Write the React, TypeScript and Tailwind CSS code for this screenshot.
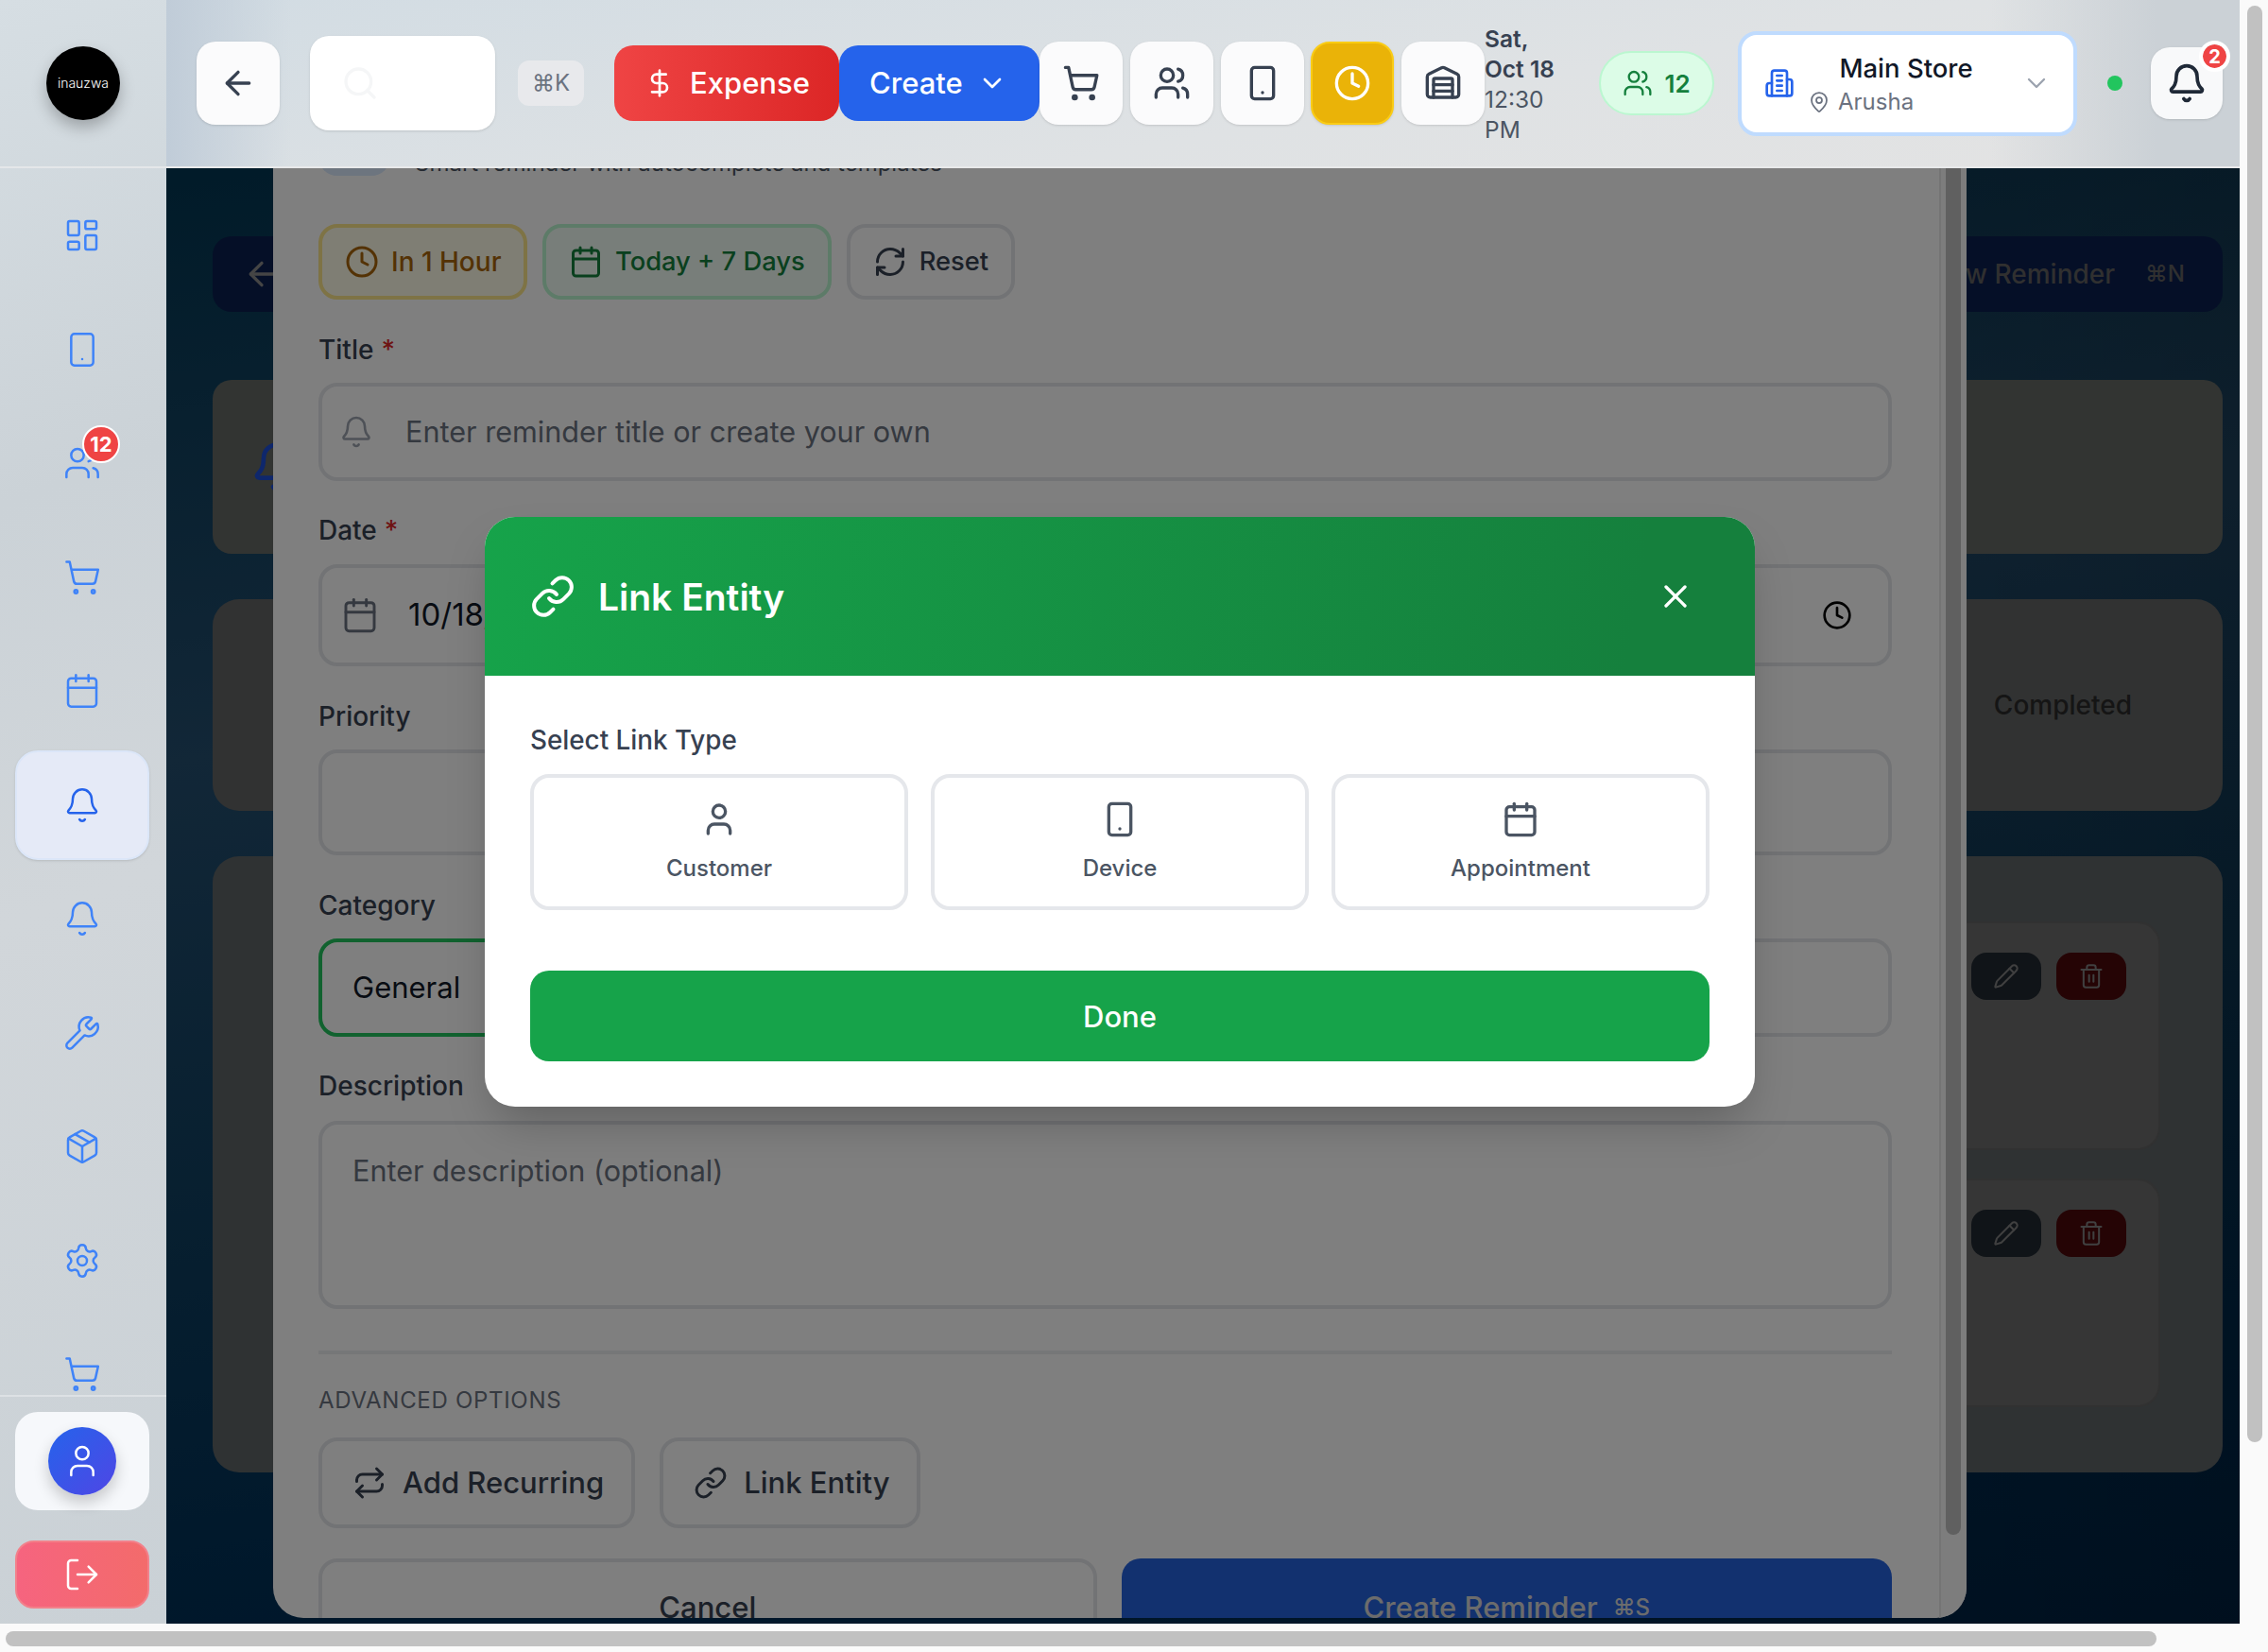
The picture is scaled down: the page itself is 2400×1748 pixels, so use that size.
import React from 'react';
import {
  ArrowLeft, Bell, Calendar, ChevronDown, Clock, DollarSign, LayoutDashboard, Link as LinkIcon,
  LogOut, MapPin, Package, Pencil, RefreshCw, Repeat, Search, Settings, ShoppingCart, Smartphone, Trash2,
  User, Users, Warehouse, Wrench, X,
} from 'lucide-react';

const navItems = [
  { icon: LayoutDashboard },
  { icon: Smartphone },
  { icon: Users, badge: '12' },
  { icon: ShoppingCart },
  { icon: Calendar },
  { icon: Bell, active: true },
  { icon: Bell },
  { icon: Wrench },
  { icon: Package },
  { icon: Settings },
  { icon: ShoppingCart },
];

// lucide's older Building2, the current one has different windows
const StoreIcon = () => (
  <svg viewBox="0 0 24 24" fill="none" stroke="currentColor" strokeWidth={2} strokeLinecap="round" strokeLinejoin="round" className="h-8 w-8 shrink-0 text-[#2563eb]">
    <path d="M6 22V4a2 2 0 0 1 2-2h8a2 2 0 0 1 2 2v18Z" />
    <path d="M6 12H4a2 2 0 0 0-2 2v6a2 2 0 0 0 2 2h2" />
    <path d="M18 9h2a2 2 0 0 1 2 2v9a2 2 0 0 1-2 2h-2" />
    <path d="M10 6h4" />
    <path d="M10 10h4" />
    <path d="M10 14h4" />
    <path d="M10 18h4" />
  </svg>
);

const Sidebar = () => (
  <aside className="relative z-40 flex w-[176px] shrink-0 flex-col bg-[linear-gradient(160deg,#d6dee3_0%,#cbd2d7_30%,#d1d6da_55%,#cad1d6_100%)]">
    <div className="flex h-[178px] shrink-0 items-center justify-center border-b-2 border-[#e4e7e9]">
      <div className="flex h-[78px] w-[78px] items-center justify-center rounded-full bg-black shadow-[0_8px_16px_rgba(0,0,0,0.25)]">
        <span className="text-[14px] font-light leading-none text-white">inauzwa</span>
      </div>
    </div>
    <nav className="flex min-h-0 flex-1 flex-col gap-[4.5px] overflow-hidden pl-4 pr-[18px] pt-[13px]">
      {navItems.map((item, i) => (
        <div
          key={i}
          className={`relative flex h-[116px] shrink-0 items-center justify-center rounded-[24px] ${
            item.active ? 'border-2 border-[#dbe6f8] bg-[#e5eaf7] shadow-sm' : ''
          }`}
        >
          <item.icon className={`h-10 w-10 ${item.active ? 'text-[#2563eb]' : 'text-[#3f83f8]'}`} strokeWidth={1.5} />
          {item.badge && (
            <span className="absolute left-[71px] top-[18px] flex h-10 w-10 items-center justify-center rounded-full border-2 border-white bg-[#ef4444] text-[22px] font-bold text-white">
              {item.badge}
            </span>
          )}
        </div>
      ))}
    </nav>
    <div className="flex shrink-0 flex-col gap-8 border-t-2 border-[#dde1e4] pb-4 pl-4 pr-[18px] pt-4">
      <div className="flex h-[104px] items-center justify-center rounded-[24px] bg-[#f6f8fb]">
        <div className="flex h-[72px] w-[72px] items-center justify-center rounded-full bg-[linear-gradient(135deg,#2563eb,#4f46e5)] shadow-[0_8px_16px_rgba(0,0,0,0.2)]">
          <User className="h-10 w-10 text-white" strokeWidth={1.5} />
        </div>
      </div>
      <div className="flex h-[72px] items-center justify-center rounded-[20px] border-2 border-[#f2808a] bg-[linear-gradient(90deg,#f6647f,#f36b6b)]">
        <LogOut className="h-10 w-10 text-white" strokeWidth={1.5} />
      </div>
    </div>
  </aside>
);

const IconButton = ({ icon: Icon, active }: { icon: React.ElementType; active?: boolean }) => (
  <button
    className={`flex h-[88px] w-[88px] shrink-0 items-center justify-center rounded-[20px] shadow-sm ${
      active ? 'border-2 border-[#facc15] bg-[#eab308] text-white' : 'bg-[#fbfbfc] text-[#374151]'
    }`}
  >
    <Icon className="h-10 w-10" strokeWidth={2} />
  </button>
);

const Header = () => (
  <header className="relative z-40 flex h-[178px] shrink-0 items-center border-b-2 border-[#e8e9ea] bg-[linear-gradient(90deg,#c0ccd8_0%,rgba(192,204,216,0)_6%,rgba(205,211,215,0)_88%,#cbd1d6_96%),linear-gradient(170deg,#d2dce3_0%,#dfe2e4_60%,#e3e3e3_100%)] pl-8">
    <IconButton icon={ArrowLeft} />
    <div className="ml-8 flex h-[100px] w-[196px] shrink-0 items-center rounded-[20px] bg-white pl-[33px] shadow-sm">
      <Search className="h-10 w-10 text-[#f5f6f7]" strokeWidth={2} />
    </div>
    <span className="ml-6 flex h-12 w-[70px] shrink-0 items-center justify-center rounded-xl bg-[#e8e9ec] text-2xl text-[#6b7280]">⌘K</span>
    <button className="ml-8 flex h-20 w-[238px] shrink-0 items-center gap-4 rounded-[20px] bg-[linear-gradient(90deg,#ef4444,#dc2626)] pl-8 text-[31px] font-medium text-white">
      <DollarSign className="h-8 w-8" strokeWidth={2} />
      Expense
    </button>
    <button className="flex h-20 w-[212px] shrink-0 items-center rounded-[20px] bg-[#2563eb] pl-8 text-[31px] font-medium text-white">
      Create
      <ChevronDown className="ml-[15px] h-8 w-8" strokeWidth={2} />
    </button>
    <div className="flex shrink-0 gap-[7.75px]">
      <IconButton icon={ShoppingCart} />
      <IconButton icon={Users} />
      <IconButton icon={Smartphone} />
      <IconButton icon={Clock} active />
      <IconButton icon={Warehouse} />
    </div>
    <div className="mt-[2px] w-[96px] shrink-0 text-[24.5px] leading-8">
      <div className="font-semibold text-[#374151]">Sat,<br />Oct 18</div>
      <div className="text-[#4b5563]">12:30<br />PM</div>
    </div>
    <div className="ml-[25px] flex h-[68px] w-[122px] shrink-0 items-center justify-center gap-3 rounded-full border-2 border-[#bbf7d0] bg-[#dcfce7] text-[26px] font-semibold text-[#15803d]">
      <Users className="h-8 w-8" strokeWidth={1.75} />
      12
    </div>
    <div className="ml-[25px] flex h-[111px] w-[359px] shrink-0 items-center rounded-[20px] border-4 border-[#bfdbfe] bg-white pl-6">
      <StoreIcon />
      <div className="ml-[17px] flex w-[202px] flex-col">
        <span className="text-center text-[27.5px] font-medium leading-10 text-[#111827]">Main Store</span>
        <span className="-ml-[3px] flex items-center gap-2 text-2xl leading-8 text-[#6b7280]">
          <MapPin className="h-6 w-6" strokeWidth={1.75} />
          Arusha
        </span>
      </div>
      <ChevronDown className="ml-[21px] h-8 w-8 text-[#9ca3af]" strokeWidth={1.75} />
    </div>
    <span className="ml-8 h-4 w-4 shrink-0 rounded-full bg-[#22c55e]" />
    <button className="relative ml-[30px] flex h-[76px] w-[76px] shrink-0 items-center justify-center rounded-[20px] bg-[#f8f9fa] text-[#1f2937] shadow-sm">
      <Bell className="h-11 w-11" strokeWidth={2} />
      <span className="absolute -right-1 -top-[3px] flex h-[25px] w-[25px] items-center justify-center rounded-full bg-[#ef4444] text-[20px] font-bold leading-none text-white outline-[4px] outline-white">2</span>
    </button>
  </header>
);

// The page behind the dialogs; colours are picked to come out right under the dim layer
const ReminderRow = () => (
  <div className="flex h-[242px] justify-end rounded-[24px] border-2 border-[#626262] bg-[#6c6c6c] pr-[34px] pt-[31px]">
    <div className="flex h-[50px] gap-4">
      <span className="flex w-[74px] items-center justify-center rounded-2xl bg-[#202830]">
        <Pencil className="h-7 w-7 text-[#808080]" strokeWidth={1.75} />
      </span>
      <span className="flex w-[74px] items-center justify-center rounded-2xl bg-[#4a080b]">
        <Trash2 className="h-7 w-7 text-[#808080]" strokeWidth={1.75} />
      </span>
    </div>
  </div>
);

const RemindersPage = () => (
  <main className="flex min-h-0 flex-1 flex-col gap-[48px] bg-[linear-gradient(90deg,rgba(0,0,0,0)_50%,rgba(0,0,0,0.2)_100%),linear-gradient(172deg,#023652_0%,#244e6f_34%,#0f3f60_60%,#003057_82%,#00274c_100%)] pb-[160px] pl-[49px] pr-[18px] pt-[72px]">
    <div className="flex h-20 shrink-0 items-center justify-between">
      <button className="flex h-20 w-[240px] items-center rounded-[20px] bg-[#0b1f4e] pl-8 text-[#8a8a8a]">
        <ArrowLeft className="h-10 w-10" />
      </button>
      <button className="flex h-20 items-center gap-8 rounded-[20px] bg-[#0b1f4e] pl-10 pr-10 text-[28px] font-medium text-[#606060]">
        New Reminder
        <span className="text-2xl">⌘N</span>
      </button>
    </div>
    <div className="mt-[24px] flex h-[184px] shrink-0 items-center rounded-[20px] bg-[#646864] pl-10">
      <Bell className="h-[56px] w-[56px] text-[#1d4ed8]" strokeWidth={2} />
    </div>
    <div className="flex h-[224px] shrink-0 items-center justify-end rounded-[28px] bg-[#626464] pr-[96px] text-[28px] font-medium text-[#2a2a2a]">
      Completed
    </div>
    <div className="flex h-[652px] shrink-0 flex-col gap-[30px] rounded-[28px] bg-[#5f6466] pl-[68px] pr-[66px] pt-[69px]">
      <ReminderRow />
      <ReminderRow />
    </div>
  </main>
);

const Field = ({ label, required, className, children }: { label: string; required?: boolean; className?: string; children: React.ReactNode }) => (
  <div className={className}>
    <label className="block h-10 text-[28px] font-medium leading-10 text-[#374151]">
      {label}
      {required && <span className="ml-2 text-[#dc2626]">*</span>}
    </label>
    {children}
  </div>
);

const inputBox = 'flex items-center rounded-[20px] border-4 border-[#e5e7eb]';

const ReminderPanel = () => (
  <div className="absolute inset-0 z-10 flex items-center justify-center">
    <div className="flex h-[1706px] w-[1792px] overflow-hidden rounded-[32px] bg-white">
      <div className="min-w-0 flex-1 pl-12 pr-[50px] pt-[94px]">
        <div className="flex h-[86px] items-end gap-[26px]">
          <div className="h-[86px] w-[76px] rounded-[20px] bg-[#dbeafe]" />
          <p className="-mb-[3px] text-2xl leading-8 text-[#4b5563]">Smart reminder with autocomplete and templates</p>
        </div>
        <div className="mt-[51px] flex h-20 gap-4 whitespace-nowrap text-[27.3px] font-medium">
          <button className="flex w-[221px] items-center gap-[13px] rounded-[20px] border-4 border-[#fde68a] bg-[#fefce8] pl-6 text-[28px] text-[#a8650a]">
            <Clock className="h-9 w-9" strokeWidth={2} /> In 1 Hour
          </button>
          <button className="flex items-center gap-[13px] rounded-[20px] border-4 border-[#bbf7d0] bg-[#f0fdf4] px-6 text-[#15803d]">
            <Calendar className="h-9 w-9" strokeWidth={2} /> Today + 7 Days
          </button>
          <button className="flex items-center gap-[13px] rounded-[20px] border-4 border-[#e5e7eb] bg-white px-6 text-[#374151]">
            <RefreshCw className="h-9 w-9" strokeWidth={2} /> Reset
          </button>
        </div>
        <Field label="Title" required className="mt-[33px]">
          <div className={`mt-[15px] h-[104px] ${inputBox} pl-[18px] text-[30.6px] text-[#6b7280]`}>
            <Bell className="h-9 w-9 text-[#9ca3af]" strokeWidth={1.75} />
            <span className="ml-[34px]">Enter reminder title or create your own</span>
          </div>
        </Field>
        <Field label="Date" required className="mt-8">
          <div className="mt-4 grid grid-cols-2 gap-6">
            <div className={`h-[108px] ${inputBox} pl-5 text-[33px] text-[#111827]`}>
              <Calendar className="h-10 w-10 text-[#6b7280]" strokeWidth={1.75} />
              <span className="ml-[31px]">10/18/2025</span>
            </div>
            <div className={`h-[108px] ${inputBox} justify-end pr-[38px]`}>
              <Clock className="h-8 w-8 text-black" strokeWidth={2} />
            </div>
          </div>
        </Field>
        <Field label="Priority" className="mt-[33px]">
          <div className={`mt-[15px] h-[112px] ${inputBox}`} />
        </Field>
        <Field label="Category" className="mt-[33px]">
          <div className="mt-[15px] grid grid-cols-2 gap-6">
            <div className="flex h-[104px] items-center rounded-[20px] border-4 border-[#22c55e] pl-8 text-[31px] text-[#111827]">General</div>
            <div className={`h-[104px] ${inputBox}`} />
          </div>
        </Field>
        <Field label="Description" className="mt-8">
          <div className="mt-[17px] h-[199px] rounded-[20px] border-4 border-[#e5e7eb] pl-8 pt-[26px] text-[30.6px] text-[#6b7280]">Enter description (optional)</div>
        </Field>
        <div className="mt-[44px] h-1 bg-[#eceef0]" />
        <p className="mt-[33px] text-2xl leading-8 tracking-[0.7px] text-[#6b7280]">ADVANCED OPTIONS</p>
        <div className="mt-[23px] flex h-24 gap-[26px] text-[31px] font-medium text-[#374151]">
          <button className="flex items-center gap-[17px] rounded-[20px] border-4 border-[#e5e7eb] pl-8 pr-[29px]">
            <Repeat className="h-9 w-9" strokeWidth={2} /> Add Recurring
          </button>
          <button className="flex items-center gap-[17px] rounded-[20px] border-4 border-[#e5e7eb] pl-8 pr-[29px]">
            <LinkIcon className="h-9 w-9" strokeWidth={2} /> Link Entity
          </button>
        </div>
        <div className="mt-8 flex h-24 gap-[26px] text-[31px] font-medium">
          <button className="flex-1 rounded-[20px] border-4 border-[#e5e7eb] pt-2 text-[#374151]">Cancel</button>
          <button className="flex flex-1 items-center justify-center gap-4 rounded-[20px] bg-[#2563df] pt-2 text-[#d9d9d9]">
            Create Reminder <span className="text-2xl">⌘S</span>
          </button>
        </div>
      </div>
      <div className="w-[29px] shrink-0 border-l-2 border-[#e8e8e8] bg-[#fafafa] pl-[5px] pt-[6px]">
        <div className="h-[1612px] w-4 rounded-full bg-[#c1c1c1]" />
      </div>
    </div>
  </div>
);

const linkTypes = [
  { name: 'Customer', icon: User },
  { name: 'Device', icon: Smartphone },
  { name: 'Appointment', icon: Calendar },
];

const LinkEntityModal = () => (
  <div className="absolute inset-0 z-50 flex items-center justify-center">
    <div className="w-[1344px] overflow-hidden rounded-[32px] bg-white shadow-2xl">
      <div className="flex h-[168px] items-center justify-between bg-[linear-gradient(100deg,#16a34a_0%,#15803d_90%)] pl-12 pr-[64px]">
        <div className="flex items-center gap-6 text-white">
          <LinkIcon className="h-12 w-12" strokeWidth={2} />
          <h2 className="pt-[2px] text-[39px] font-semibold">Link Entity</h2>
        </div>
        <X className="h-10 w-10 text-white" strokeWidth={2} />
      </div>
      <div className="p-12 pt-[48px]">
        <p className="text-[27.8px] font-medium leading-10 text-[#374151]">Select Link Type</p>
        <div className="mt-4 grid grid-cols-3 gap-6">
          {linkTypes.map(t => (
            <button key={t.name} className="flex h-[144px] flex-col items-center justify-center gap-4 rounded-[20px] border-4 border-[#e5e7eb] bg-white text-[#4b5563]">
              <t.icon className="h-10 w-10" strokeWidth={2} />
              <span className="text-2xl font-medium leading-8">{t.name}</span>
            </button>
          ))}
        </div>
        <button className="mt-16 h-24 w-full rounded-[20px] bg-[#16a34a] pt-[2px] text-[31px] font-medium text-white">Done</button>
      </div>
    </div>
  </div>
);

export default function App() {
  return (
    <div className="flex h-[1748px] w-[2400px] flex-col overflow-hidden bg-[#fafafa] font-['Inter',sans-serif]">
      <div className="flex min-h-0 flex-1">
        <div className="relative flex min-w-0 flex-1">
          <Sidebar />
          <div className="flex min-w-0 flex-1 flex-col">
            <Header />
            <RemindersPage />
          </div>
          <ReminderPanel />
          <div className="absolute inset-0 z-20 bg-black/50" />
          <LinkEntityModal />
        </div>
        {/* page scrollbar */}
        <div className="w-[30px] shrink-0 pl-2 pt-[6px]">
          <div className="h-[1520px] w-4 rounded-full bg-[#c1c1c1]" />
        </div>
      </div>
      <div className="h-[30px] shrink-0 pl-[6px] pt-2">
        <div className="h-4 w-[2276px] rounded-full bg-[#c1c1c1]" />
      </div>
    </div>
  );
}
